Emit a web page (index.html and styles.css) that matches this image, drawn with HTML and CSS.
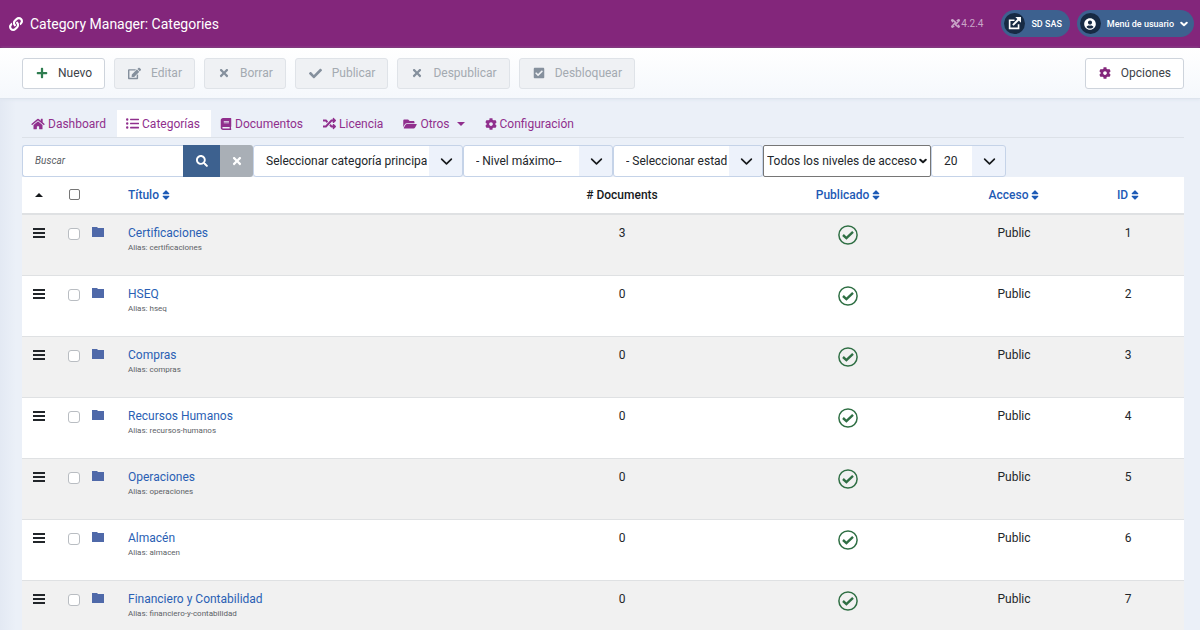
FILE: index.html
```html
<!DOCTYPE html>
<html lang="es">
<head>
<meta charset="utf-8">
<meta name="viewport" content="width=device-width, initial-scale=1">
<title>Category Manager: Categories</title>
<link rel="stylesheet" href="styles.css">
</head>
<body>
<svg class="sprite" aria-hidden="true">
  <symbol id="link" viewBox="0 0 512 512"><path d="M326.612 185.391c59.747 59.809 58.927 155.698.36 214.59-.11.12-.24.25-.36.37l-67.2 67.2c-59.27 59.27-155.699 59.262-214.96 0-59.27-59.26-59.27-155.7 0-214.96l37.106-37.106c9.84-9.84 26.786-3.3 27.294 10.606.648 17.722 3.826 35.527 9.69 52.721 1.986 5.822.567 12.262-3.783 16.612l-13.087 13.087c-28.026 28.026-28.905 73.66-1.155 101.96 28.024 28.579 74.086 28.749 102.325.51l67.2-67.19c28.191-28.191 28.073-73.757 0-101.83-3.701-3.694-7.429-6.564-10.341-8.569a16.037 16.037 0 0 1-6.947-12.606c-.396-10.567 3.348-21.456 11.698-29.806l21.054-21.055c5.521-5.521 14.182-6.199 20.584-1.731a152.482 152.482 0 0 1 20.522 17.197zM467.547 44.449c-59.261-59.262-155.69-59.27-214.96 0l-67.2 67.2c-.12.12-.25.25-.36.37-58.566 58.892-59.387 154.781.36 214.59a152.454 152.454 0 0 0 20.521 17.196c6.402 4.468 15.064 3.789 20.584-1.731l21.054-21.055c8.35-8.35 12.094-19.239 11.698-29.806a16.037 16.037 0 0 0-6.947-12.606c-2.912-2.005-6.64-4.875-10.341-8.569-28.073-28.073-28.191-73.639 0-101.83l67.2-67.19c28.239-28.239 74.3-28.069 102.325.51 27.75 28.3 26.872 73.934-1.155 101.96l-13.087 13.087c-4.35 4.35-5.769 10.79-3.783 16.612 5.864 17.194 9.042 34.999 9.69 52.721.509 13.906 17.454 20.446 27.294 10.606l37.106-37.106c59.271-59.259 59.271-155.699.001-214.959z"/></symbol>
  <symbol id="plus" viewBox="0 0 448 512"><path d="M416 208H272V64c0-17.67-14.33-32-32-32h-32c-17.67 0-32 14.33-32 32v144H32c-17.67 0-32 14.33-32 32v32c0 17.67 14.33 32 32 32h144v144c0 17.67 14.33 32 32 32h32c17.67 0 32-14.33 32-32V304h144c17.67 0 32-14.33 32-32v-32c0-17.67-14.33-32-32-32z"/></symbol>
  <symbol id="edit" viewBox="0 0 576 512"><path d="M402.6 83.2l90.2 90.2c3.8 3.8 3.8 10 0 13.8L274.4 405.6l-92.8 10.3c-12.4 1.4-22.9-9.1-21.5-21.5l10.3-92.8L388.8 83.2c3.8-3.8 10-3.8 13.8 0zm162-22.9l-48.8-48.8c-15.2-15.2-39.9-15.2-55.2 0l-35.4 35.4c-3.8 3.8-3.8 10 0 13.8l90.2 90.2c3.8 3.8 10 3.8 13.8 0l35.4-35.4c15.2-15.3 15.2-40 0-55.2zM384 346.2V448H64V128h229.8c3.2 0 6.2-1.3 8.5-3.5l40-40c7.6-7.6 2.2-20.5-8.5-20.5H48C21.5 64 0 85.5 0 112v352c0 26.5 21.5 48 48 48h352c26.5 0 48-21.5 48-48V306.2c0-10.7-12.9-16-20.5-8.5l-40 40c-2.2 2.3-3.5 5.3-3.5 8.5z"/></symbol>
  <symbol id="times" viewBox="0 0 352 512"><path d="M242.72 256l100.07-100.07c12.28-12.28 12.28-32.19 0-44.48l-22.24-22.24c-12.28-12.28-32.19-12.28-44.48 0L176 189.28 75.93 89.21c-12.28-12.28-32.19-12.28-44.48 0L9.21 111.45c-12.28 12.28-12.28 32.19 0 44.48L109.28 256 9.21 356.07c-12.28 12.28-12.28 32.19 0 44.48l22.24 22.24c12.28 12.28 32.2 12.28 44.48 0L176 322.72l100.07 100.07c12.28 12.28 32.2 12.28 44.48 0l22.24-22.24c12.28-12.28 12.28-32.19 0-44.48L242.72 256z"/></symbol>
  <symbol id="check" viewBox="0 0 512 512"><path d="M173.898 439.404l-166.4-166.4c-9.997-9.997-9.997-26.206 0-36.204l36.203-36.204c9.997-9.998 26.207-9.998 36.204 0L192 312.69 432.095 72.596c9.997-9.997 26.207-9.997 36.204 0l36.203 36.204c9.997 9.997 9.997 26.206 0 36.204l-294.4 294.401c-9.998 9.997-26.207 9.997-36.204-.001z"/></symbol>
  <symbol id="check-square" viewBox="0 0 448 512"><path d="M400 480H48c-26.510 0-48-21.490-48-48V80c0-26.510 21.490-48 48-48h352c26.510 0 48 21.490 48 48v352c0 26.510-21.490 48-48 48zm-204.686-98.059l184-184c6.248-6.248 6.248-16.379 0-22.627l-22.627-22.627c-6.248-6.248-16.379-6.249-22.628 0L184 302.745l-70.059-70.059c-6.248-6.248-16.379-6.248-22.628 0l-22.627 22.627c-6.248 6.248-6.248 16.379 0 22.627l104 104c6.249 6.249 16.379 6.249 22.628.001z"/></symbol>
  <symbol id="cog" viewBox="0 0 512 512"><path d="M487.4 315.7l-42.6-24.6c4.3-23.2 4.3-47 0-70.2l42.6-24.6c4.900-2.800 7.100-8.600 5.500-14-11.100-35.600-30-67.800-54.700-94.600-3.800-4.100-10-5.100-14.800-2.300L380.800 110c-17.900-15.400-38.500-27.300-60.800-35.100V25.800c0-5.600-3.900-10.500-9.400-11.700-36.700-8.200-74.300-7.800-109.200 0-5.500 1.200-9.400 6.100-9.400 11.700V75c-22.200 7.900-42.8 19.800-60.800 35.100L88.700 85.500c-4.900-2.800-11-1.900-14.800 2.300-24.700 26.7-43.600 58.900-54.700 94.600-1.700 5.400.6 11.200 5.500 14L67.300 221c-4.300 23.2-4.300 47 0 70.2l-42.600 24.600c-4.900 2.800-7.100 8.600-5.500 14 11.100 35.6 30 67.800 54.700 94.600 3.800 4.100 10 5.100 14.800 2.300l42.600-24.600c17.900 15.4 38.5 27.300 60.800 35.100v49.200c0 5.600 3.900 10.500 9.400 11.700 36.700 8.200 74.300 7.800 109.200 0 5.500-1.200 9.400-6.100 9.400-11.700v-49.200c22.200-7.900 42.800-19.800 60.800-35.100l42.600 24.600c4.900 2.8 11 1.900 14.800-2.300 24.700-26.700 43.600-58.900 54.700-94.600 1.500-5.500-.7-11.300-5.600-14.100zM256 336c-44.100 0-80-35.900-80-80s35.900-80 80-80 80 35.900 80 80-35.900 80-80 80z"/></symbol>
  <symbol id="home" viewBox="0 0 576 512"><path d="M280.370 148.260L96 300.110V464a16 16 0 0 0 16 16l112.060-.29a16 16 0 0 0 15.920-16V368a16 16 0 0 1 16-16h64a16 16 0 0 1 16 16v95.640a16 16 0 0 0 16 16.050L464 480a16 16 0 0 0 16-16V300L295.670 148.260a12.190 12.190 0 0 0-15.300 0zM571.600 251.470L488 182.560V44.050a12 12 0 0 0-12-12h-56a12 12 0 0 0-12 12v72.610L318.470 43a48 48 0 0 0-61 0L4.340 251.470a12 12 0 0 0-1.600 16.900l25.500 31A12 12 0 0 0 45.150 301l235.220-193.740a12.190 12.190 0 0 1 15.300 0L530.900 301a12 12 0 0 0 16.900-1.600l25.500-31a12 12 0 0 0-1.700-16.930z"/></symbol>
  <symbol id="list" viewBox="0 0 512 512"><path d="M48 48a48 48 0 1 0 48 48 48 48 0 0 0-48-48zm0 160a48 48 0 1 0 48 48 48 48 0 0 0-48-48zm0 160a48 48 0 1 0 48 48 48 48 0 0 0-48-48zm448 16H176a16 16 0 0 0-16 16v32a16 16 0 0 0 16 16h320a16 16 0 0 0 16-16v-32a16 16 0 0 0-16-16zm0-320H176a16 16 0 0 0-16 16v32a16 16 0 0 0 16 16h320a16 16 0 0 0 16-16V80a16 16 0 0 0-16-16zm0 160H176a16 16 0 0 0-16 16v32a16 16 0 0 0 16 16h320a16 16 0 0 0 16-16v-32a16 16 0 0 0-16-16z"/></symbol>
  <symbol id="book" viewBox="0 0 448 512"><path d="M448 360V24c0-13.300-10.700-24-24-24H96C43 0 0 43 0 96v320c0 53 43 96 96 96h328c13.300 0 24-10.700 24-24v-16c0-7.500-3.500-14.300-8.900-18.700-4.200-15.400-4.200-59.300 0-74.700 5.400-4.300 8.900-11.100 8.900-18.600zM128 134c0-3.300 2.700-6 6-6h212c3.300 0 6 2.700 6 6v20c0 3.300-2.700 6-6 6H134c-3.300 0-6-2.700-6-6v-20zm0 64c0-3.300 2.700-6 6-6h212c3.300 0 6 2.700 6 6v20c0 3.300-2.700 6-6 6H134c-3.300 0-6-2.700-6-6v-20zm253.400 250H96c-17.700 0-32-14.300-32-32 0-17.600 14.400-32 32-32h285.400c-1.900 17.100-1.900 46.900 0 64z"/></symbol>
  <symbol id="random" viewBox="0 0 512 512"><path d="M504.971 359.029c9.373 9.373 9.373 24.569 0 33.941l-80 79.984c-15.010 15.010-40.971 4.490-40.971-16.971V416h-58.785a12.004 12.004 0 0 1-8.773-3.812l-70.556-75.596 53.333-57.143L352 336h32v-39.981c0-21.438 25.943-31.998 40.971-16.971l80 79.981zM12 176h84l52.781 56.551 53.333-57.143-70.556-75.596A11.999 11.999 0 0 0 122.785 96H12c-6.627 0-12 5.373-12 12v56c0 6.627 5.373 12 12 12zm372 0v39.984c0 21.460 25.961 31.980 40.971 16.971l80-79.984c9.373-9.373 9.373-24.569 0-33.941l-80-79.981C409.943 24.021 384 34.582 384 56.019V96h-58.785a12.004 12.004 0 0 0-8.773 3.812L96 336H12c-6.627 0-12 5.373-12 12v56c0 6.627 5.373 12 12 12h110.785c3.326 0 6.503-1.381 8.773-3.812L352 176h32z"/></symbol>
  <symbol id="folder-open" viewBox="0 0 576 512"><path d="M572.694 292.093L500.270 416.248A63.997 63.997 0 0 1 444.989 448H45.025c-18.523 0-30.064-20.093-20.731-36.093l72.424-124.155A64 64 0 0 1 152 256h399.964c18.523 0 30.064 20.093 20.730 36.093zM152 224h328v-48c0-26.510-21.490-48-48-48H272l-64-64H48C21.490 64 0 85.490 0 112v278.046l69.077-118.418C86.214 242.250 117.989 224 152 224z"/></symbol>
  <symbol id="search" viewBox="0 0 512 512"><path d="M505 442.700L405.300 343c-4.500-4.500-10.600-7-17-7H372c27.600-35.300 44-79.700 44-128C416 93.100 322.900 0 208 0S0 93.100 0 208s93.100 208 208 208c48.300 0 92.700-16.400 128-44v16.300c0 6.400 2.500 12.500 7 17l99.700 99.700c9.400 9.400 24.600 9.400 33.900 0l28.300-28.300c9.400-9.400 9.400-24.600.1-34zM208 336c-70.700 0-128-57.200-128-128 0-70.700 57.200-128 128-128 70.700 0 128 57.200 128 128 0 70.700-57.200 128-128 128z"/></symbol>
  <symbol id="sort" viewBox="0 0 320 512"><path d="M41 288h238c21.400 0 32.100 25.900 17 41L177 448c-9.400 9.400-24.600 9.400-33.900 0L24 329c-15.100-15.100-4.400-41 17-41zm255-105L177 64c-9.400-9.400-24.600-9.400-33.900 0L24 183c-15.100 15.100-4.400 41 17 41h238c21.400 0 32.100-25.900 17-41z"/></symbol>
  <symbol id="user" viewBox="0 0 496 512"><path d="M248 8C111 8 0 119 0 256s111 248 248 248 248-111 248-248S385 8 248 8zm0 96c48.600 0 88 39.400 88 88s-39.400 88-88 88-88-39.400-88-88 39.400-88 88-88zm0 344c-58.700 0-111.300-26.600-146.500-68.200 18.800-35.400 55.600-59.800 98.500-59.800 2.400 0 4.800.4 7.100 1.100 13 4.200 26.600 6.900 40.900 6.900 14.300 0 28-2.700 40.900-6.900 2.300-.7 4.700-1.100 7.100-1.100 42.900 0 79.700 24.400 98.500 59.800C359.300 421.400 306.700 448 248 448z"/></symbol>
  <symbol id="external" viewBox="0 0 16 16"><path d="M8 4H2v10h11V9" fill="none" stroke="currentColor" stroke-width="2"/><path d="M6 10l7.500-7.500" fill="none" stroke="currentColor" stroke-width="2.400"/><path d="M9 0h7v7z"/></symbol>
  <symbol id="chevron" viewBox="0 0 16 16"><path d="M2 5l6 6 6-6" fill="none" stroke="currentColor" stroke-width="2" stroke-linecap="round" stroke-linejoin="round"/></symbol>
  <symbol id="chevron-bold" viewBox="0 0 16 16"><path d="M2.500 5.500L8 10.500l5.500-5" fill="none" stroke="currentColor" stroke-width="4" stroke-linecap="round" stroke-linejoin="round"/></symbol>
  <symbol id="joomla" viewBox="0 0 16 16"><path d="M3 6q-1-3 2-3l6 6M10 3q3-1 3 2l-6 6M13 10q1 3-2 3L5 7M6 13q-3 1-3-2l6-6" fill="none" stroke="currentColor" stroke-width="2.200"/><circle cx="2.500" cy="2.500" r="2.500"/><circle cx="13.500" cy="2.500" r="2.500"/><circle cx="2.500" cy="13.500" r="2.500"/><circle cx="13.500" cy="13.500" r="2.500"/></symbol>
  <symbol id="bars" viewBox="0 0 12 12"><path d="M0 1h12v2H0zM0 5h12v2H0zM0 9h12v2H0z"/></symbol>
  <symbol id="folder" viewBox="0 0 12 10"><path d="M0 0h5l1 1h6v9H0z"/></symbol>
  <symbol id="caret-up" viewBox="0 0 8 4"><path d="M4 0l4 4H0z"/></symbol>
  <symbol id="caret-down" viewBox="0 0 8 4"><path d="M0 0h8L4 4z"/></symbol>
  <symbol id="published" viewBox="0 0 20 20"><circle cx="10" cy="10" r="9.100" fill="none" stroke="currentColor" stroke-width="1.500"/><path d="M5 10l3.400 3.100 6.600-6.300" fill="none" stroke="currentColor" stroke-width="2.400"/></symbol>
</svg>

<header class="header">
  <h1 class="page-title"><svg class="icon icon-lg"><use href="#link"/></svg>Category Manager: Categories</h1>
  <div class="header-items">
    <span class="version"><svg class="icon-version"><use href="#joomla"/></svg>4.2.4</span>
    <a class="pill" href="#"><span class="pill-icon"><svg class="icon icon-mid"><use href="#external"/></svg></span>SD SAS</a>
    <button class="pill" type="button"><span class="pill-icon"><svg class="icon"><use href="#user"/></svg></span>Menú de usuario<svg class="icon-chevron"><use href="#chevron-bold"/></svg></button>
  </div>
</header>

<div class="toolbar">
  <button class="btn" type="button"><svg class="icon green"><use href="#plus"/></svg>Nuevo</button>
  <button class="btn" type="button" disabled><svg class="icon icon-mid"><use href="#edit"/></svg>Editar</button>
  <button class="btn" type="button" disabled><svg class="icon"><use href="#times"/></svg>Borrar</button>
  <button class="btn" type="button" disabled><svg class="icon icon-mid"><use href="#check"/></svg>Publicar</button>
  <button class="btn" type="button" disabled><svg class="icon"><use href="#times"/></svg>Despublicar</button>
  <button class="btn" type="button" disabled><svg class="icon"><use href="#check-square"/></svg>Desbloquear</button>
  <button class="btn btn-options" type="button"><svg class="icon purple"><use href="#cog"/></svg>Opciones</button>
</div>

<main class="content">
  <nav class="tabs">
    <a class="tab" href="#"><svg class="icon icon-wide"><use href="#home"/></svg>Dashboard</a>
    <a class="tab active" href="#" aria-current="page"><svg class="icon icon-mid"><use href="#list"/></svg>Categorías</a>
    <a class="tab" href="#"><svg class="icon"><use href="#book"/></svg>Documentos</a>
    <a class="tab" href="#"><svg class="icon icon-mid"><use href="#random"/></svg>Licencia</a>
    <a class="tab" href="#"><svg class="icon icon-wide"><use href="#folder-open"/></svg>Otros<svg class="caret caret-tab"><use href="#caret-down"/></svg></a>
    <a class="tab" href="#"><svg class="icon"><use href="#cog"/></svg>Configuración</a>
  </nav>

  <form class="filters">
    <input class="search" type="text" placeholder="Buscar" aria-label="Buscar">
    <button class="filter-btn" type="button" aria-label="Buscar"><svg class="icon"><use href="#search"/></svg></button>
    <button class="filter-btn clear" type="button" aria-label="Limpiar"><svg class="icon"><use href="#times"/></svg></button>
    <span class="select-box wide"><select aria-label="Categoría"><option>Seleccionar categoría principal</option></select><svg class="select-arrow"><use href="#chevron"/></svg></span>
    <span class="select-box"><select aria-label="Nivel máximo"><option>- Nivel máximo--</option></select><svg class="select-arrow"><use href="#chevron"/></svg></span>
    <span class="select-box"><select aria-label="Estado"><option>- Seleccionar estado -</option></select><svg class="select-arrow"><use href="#chevron"/></svg></span>
    <span class="select-box access"><select aria-label="Acceso"><option>Todos los niveles de acceso</option></select><svg class="select-arrow"><use href="#chevron-bold"/></svg></span>
    <span class="select-box narrow"><select aria-label="Límite"><option>20</option></select><svg class="select-arrow"><use href="#chevron"/></svg></span>
  </form>

  <table class="list">
    <colgroup><col class="c-drag"><col class="c-check"><col class="c-folder"><col><col class="c-docs"><col class="c-state"><col class="c-access"><col class="c-id"></colgroup>
    <thead>
      <tr><th><svg class="caret caret-head"><use href="#caret-up"/></svg></th><th><input class="box head" type="checkbox" aria-label="Marcar todo"></th><th></th><th class="title"><a href="#">Título<svg class="sort"><use href="#sort"/></svg></a></th><th># Documents</th><th><a href="#">Publicado<svg class="sort"><use href="#sort"/></svg></a></th><th><a href="#">Acceso<svg class="sort"><use href="#sort"/></svg></a></th><th><a href="#">ID<svg class="sort"><use href="#sort"/></svg></a></th></tr>
    </thead>
    <tbody>
      <tr><td><svg class="bars"><use href="#bars"/></svg></td><td><input class="box" type="checkbox" aria-label="Certificaciones"></td><td class="folder-cell"><svg class="folder"><use href="#folder"/></svg></td><td class="title"><a href="#">Certificaciones</a><small>Alias: certificaciones</small></td><td>3</td><td><svg class="published"><use href="#published"/></svg></td><td>Public</td><td>1</td></tr>
      <tr><td><svg class="bars"><use href="#bars"/></svg></td><td><input class="box" type="checkbox" aria-label="HSEQ"></td><td class="folder-cell"><svg class="folder"><use href="#folder"/></svg></td><td class="title"><a href="#">HSEQ</a><small>Alias: hseq</small></td><td>0</td><td><svg class="published"><use href="#published"/></svg></td><td>Public</td><td>2</td></tr>
      <tr><td><svg class="bars"><use href="#bars"/></svg></td><td><input class="box" type="checkbox" aria-label="Compras"></td><td class="folder-cell"><svg class="folder"><use href="#folder"/></svg></td><td class="title"><a href="#">Compras</a><small>Alias: compras</small></td><td>0</td><td><svg class="published"><use href="#published"/></svg></td><td>Public</td><td>3</td></tr>
      <tr><td><svg class="bars"><use href="#bars"/></svg></td><td><input class="box" type="checkbox" aria-label="Recursos Humanos"></td><td class="folder-cell"><svg class="folder"><use href="#folder"/></svg></td><td class="title"><a href="#">Recursos Humanos</a><small>Alias: recursos-humanos</small></td><td>0</td><td><svg class="published"><use href="#published"/></svg></td><td>Public</td><td>4</td></tr>
      <tr><td><svg class="bars"><use href="#bars"/></svg></td><td><input class="box" type="checkbox" aria-label="Operaciones"></td><td class="folder-cell"><svg class="folder"><use href="#folder"/></svg></td><td class="title"><a href="#">Operaciones</a><small>Alias: operaciones</small></td><td>0</td><td><svg class="published"><use href="#published"/></svg></td><td>Public</td><td>5</td></tr>
      <tr><td><svg class="bars"><use href="#bars"/></svg></td><td><input class="box" type="checkbox" aria-label="Almacén"></td><td class="folder-cell"><svg class="folder"><use href="#folder"/></svg></td><td class="title"><a href="#">Almacén</a><small>Alias: almacen</small></td><td>0</td><td><svg class="published"><use href="#published"/></svg></td><td>Public</td><td>6</td></tr>
      <tr><td><svg class="bars"><use href="#bars"/></svg></td><td><input class="box" type="checkbox" aria-label="Financiero y Contabilidad"></td><td class="folder-cell"><svg class="folder"><use href="#folder"/></svg></td><td class="title"><a href="#">Financiero y Contabilidad</a><small>Alias: financiero-y-contabilidad</small></td><td>0</td><td><svg class="published"><use href="#published"/></svg></td><td>Public</td><td>7</td></tr>
    </tbody>
  </table>
</main>
</body>
</html>
```
FILE: styles.css
```css
* { box-sizing: border-box; }
html { scrollbar-width: none; }
body {
  margin: 0;
  min-height: 100vh;
  background: linear-gradient(90deg, #e3e9f3, #ebf0f8 16px);
  color: #22262a;
  font-family: Roboto, "Liberation Sans", sans-serif;
  font-size: 12px;
  line-height: 16px;
}
a { color: #2a5fb4; text-decoration: none; }
button, input, select { font: inherit; margin: 0; }
svg { display: inline-block; fill: currentColor; flex: none; }
.sprite { position: absolute; width: 0; height: 0; }
.icon { width: 12px; height: 12px; }
.icon-mid { width: 13px; height: 13px; }
.icon-wide { width: 14px; }
.icon-lg { width: 14px; height: 14px; }
.green { color: #2f7d50; }
.purple { color: #83267b; }

.header {
  display: flex;
  align-items: center;
  justify-content: space-between;
  height: 48px;
  padding: 0 6px 0 9px;
  background: #83267b;
  border-bottom: 1px solid #6d1766;
  color: #fff;
}
.page-title {
  display: flex;
  align-items: center;
  gap: 7px;
  margin: 0;
  font-size: 14px;
  font-weight: 400;
}
.header-items { display: flex; align-items: center; gap: 7px; }
.version {
  display: flex;
  align-items: center;
  gap: 1px;
  margin-right: 11px;
  color: #c9a6c8;
  font-size: 10px;
}
.icon-version { width: 9px; height: 9px; }
.pill {
  display: flex;
  align-items: center;
  gap: 6px;
  height: 27px;
  padding: 0 8px 0 3px;
  border: 0;
  border-radius: 14px;
  background: #3d618f;
  color: #fff;
  font-size: 9px;
  font-weight: 500;
}
button.pill { padding-right: 6px; }
.pill-icon {
  display: grid;
  place-items: center;
  width: 21px;
  height: 21px;
  border-radius: 50%;
  background: #172a43;
}
.icon-chevron { width: 8px; height: 8px; }

.toolbar {
  display: flex;
  gap: 9px;
  padding: 10px 16px 9px 22px;
  background: linear-gradient(#fff, #f5f8fc);
  border-bottom: 1px solid #dde4ed;
  box-shadow: 0 1px 3px #dfe6f0;
}
.btn {
  display: flex;
  align-items: center;
  gap: 10px;
  height: 31px;
  padding: 0 12px 1px 13px;
  border: 1px solid #ced4dc;
  border-radius: 3px;
  background: #fff;
  color: #3c4248;
}
.btn:disabled { background: #eff1f4; border-color: #dfe3e8; color: #a4aab1; }
.btn:disabled .icon { color: #85909d; }
.btn-options { margin-left: auto; }

.content { padding: 11px 16px 0 22px; }
.tabs {
  display: flex;
  margin-bottom: 7px;
  border-bottom: 1px solid #dce1e8;
}
.tab {
  display: flex;
  align-items: center;
  gap: 3px;
  height: 27px;
  padding: 0 11px 0 9px;
  color: #902f8d;
}
.tab.active { background: #fff; }
.caret { width: 8px; height: 4px; }
.caret-tab { margin-left: 4px; }
.caret-head { vertical-align: 2px; }

.filters { display: flex; height: 32px; }
.search {
  width: 161px;
  padding: 0 12px;
  border: 1px solid #c5d3e8;
  border-right: 0;
  border-radius: 3px 0 0 3px;
  background: #fff;
  font-size: 10px;
  font-style: italic;
}
.search::placeholder { color: #5b6065; }
.filter-btn {
  display: grid;
  place-items: center;
  width: 37px;
  padding: 0;
  border: 0;
  background: #3d618f;
  color: #fff;
}
.filter-btn.clear { width: 33px; background: #a9afb6; border-radius: 0 3px 3px 0; }
.select-box { position: relative; width: 150px; }
.select-box select {
  appearance: none;
  width: 100%;
  height: 100%;
  padding: 0 35px 0 12px;
  border: 1px solid #c5d3e8;
  border-radius: 3px;
  background: linear-gradient(#edf2fb, #edf2fb) right / 33px 100% no-repeat #fff;
  color: #22262a;
}
.select-arrow {
  position: absolute;
  right: 10px;
  top: 10px;
  width: 13px;
  height: 13px;
  color: #16191c;
  pointer-events: none;
}
.select-box.wide { width: 210px; }
.select-box.narrow { width: 75px; }
.select-box.access { width: 168px; }
.select-box.access select {
  padding: 0 12px 0 3px;
  border-color: #767676;
  border-radius: 2px;
  background: #fff;
}
.select-box.access .select-arrow { right: 4px; top: 12px; width: 8px; height: 8px; }

.list {
  width: 100%;
  table-layout: fixed;
  border-collapse: collapse;
  background: #fff;
  text-align: center;
}
.c-drag { width: 34px; }
.c-check { width: 36px; }
.c-folder { width: 24px; }
.c-docs { width: 236px; }
.c-state { width: 216px; }
.c-access { width: 116px; }
.c-id { width: 112px; }
.list th {
  height: 37px;
  padding: 0;
  border-bottom: 2px solid #dfe1e3;
  font-weight: 500;
  color: #16191c;
}
.list th a { color: #1d5ab5; }
.list td {
  height: 61px;
  padding: 10px 0 0;
  border-top: 1px solid #dfe1e3;
  vertical-align: top;
}
.list tbody tr:nth-child(odd) { background: #f1f1f1; }
.list .title { padding-left: 12px; text-align: left; }
.list small { display: block; color: #5c6166; font-size: 8px; line-height: 14px; }
.list .folder-cell { text-align: left; }
.sort { width: 8px; height: 12px; margin-left: 3px; vertical-align: -2px; }
.bars { width: 12px; height: 12px; vertical-align: -2px; }
.folder { width: 12px; height: 10px; color: #4f69a9; vertical-align: 0; }
.published { width: 20px; height: 20px; color: #2f6f44; vertical-align: middle; }
.box {
  appearance: none;
  width: 12px;
  height: 12px;
  border: 1px solid #b9bdc2;
  border-radius: 3px;
  background: #fff;
  vertical-align: -3px;
}
.box.head { width: 11px; height: 11px; border-color: #767676; border-radius: 2px; vertical-align: -1px; }
```
